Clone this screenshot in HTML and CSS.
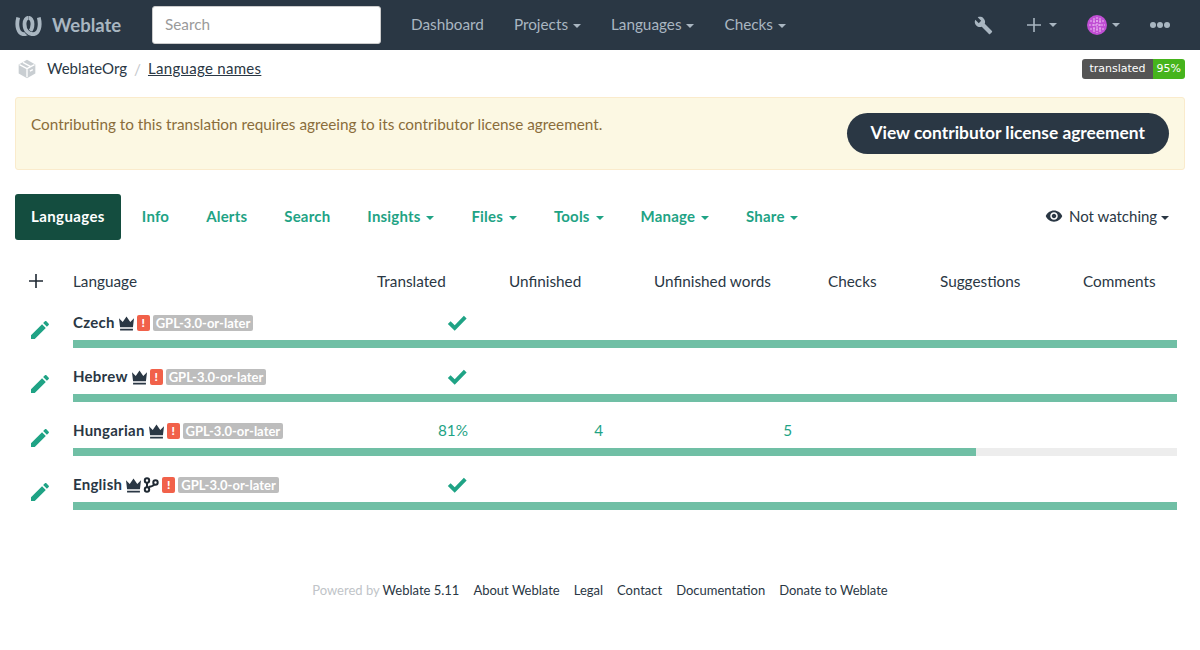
FILE: index.html
```html
<!DOCTYPE html>
<html lang="en">
<head>
    <meta charset="UTF-8">
    <meta name="viewport" content="width=device-width, initial-scale=1.0">
    <title>Language names @ Weblate</title>
    <link rel="stylesheet" href="styles.css">
</head>
<body>
    <nav class="navbar">
        <a class="brand" href="#">
            <svg class="brand-logo" viewBox="0 0 27 20" width="27" height="20">
                <path d="M3.200 1.500C1 10 3 18.200 9 18.200C13.500 18.200 17.500 14.500 17.500 8C17.500 4 15.500 1.800 13.500 1.800" fill="none" stroke="#a9b6c1" stroke-width="3.800"/>
                <path d="M23.800 1.500C26 10 24 18.200 18 18.200C13.500 18.200 9.500 14.500 9.500 8C9.500 4 11.500 1.800 13.500 1.800" fill="none" stroke="#2a3744" stroke-width="5"/>
                <path d="M23.800 1.500C26 10 24 18.200 18 18.200C13.500 18.200 9.500 14.500 9.500 8C9.500 4 11.500 1.800 13.500 1.800" fill="none" stroke="#a9b6c1" stroke-width="3.800"/>
            </svg>
            <span>Weblate</span>
        </a>
        <input class="nav-search" type="text" placeholder="Search">
        <ul class="nav-links">
            <li><a href="#">Dashboard</a></li>
            <li><a href="#">Projects <span class="caret"></span></a></li>
            <li><a href="#">Languages <span class="caret"></span></a></li>
            <li><a href="#">Checks <span class="caret"></span></a></li>
        </ul>
        <div class="nav-right">
            <svg class="nav-wrench" viewBox="0 0 24 24" width="24" height="24">
                <path d="M22.700 19l-9.100-9.100c.9-2.300.4-5-1.500-6.900-2-2-5-2.400-7.400-1.300L9 6 6 9 1.600 4.700C.4 7.100.9 10.100 2.900 12.100c1.900 1.900 4.600 2.400 6.900 1.500l9.100 9.100c.4.400 1 .4 1.400 0l2.300-2.300c.5-.4.500-1.100.1-1.400z" fill="#a9b6c1"/>
            </svg>
            <a class="nav-add" href="#">
                <svg viewBox="0 0 14 14" width="14" height="14"><path d="M6.200 0h1.600v6.200H14v1.600H7.800V14H6.200V7.800H0V6.200h6.200z" fill="#a9b6c1"/></svg>
                <span class="caret"></span>
            </a>
            <a class="nav-user" href="#">
                <svg class="avatar" viewBox="0 0 20 20" width="20" height="20">
                    <circle cx="10" cy="10" r="10" fill="#c04fd4"/>
                    <path d="M3 6h14M2 10h16M3 14h14M7 3v14M10 2v16M13 3v14" fill="none" stroke="#f0c4f5" stroke-width="0.900" stroke-dasharray="2 1"/>
                </svg>
                <span class="caret"></span>
            </a>
            <span class="nav-dots"><i></i><i></i><i></i></span>
        </div>
    </nav>

    <div class="breadcrumbs">
        <svg class="crumb-icon" viewBox="0 0 24 24" width="20" height="20">
            <path d="M12 1 L22 6.500 V17.500 L12 23 L2 17.500 V6.500 Z" fill="#c9ced2"/>
            <path d="M12 11.500 L21 6.800 M12 11.500 L3 6.800 M12 11.500 V22 M7 4 L16.500 9.200 M15.500 14.500 L19 12.700" stroke="#fff" stroke-width="1.600" fill="none"/>
        </svg>
        <a class="crumb" href="#">WeblateOrg</a>
        <span class="crumb-sep">/</span>
        <a class="crumb crumb-current" href="#">Language names</a>
        <span class="status-badge"><span class="badge-label">translated</span><span class="badge-value">95%</span></span>
    </div>

    <main class="content">
        <div class="alert">
            <p>Contributing to this translation requires agreeing to its contributor license agreement.</p>
            <a class="agreement-btn" href="#">View contributor license agreement</a>
        </div>

        <div class="tabs">
            <a class="tab tab-active" href="#">Languages</a>
            <a class="tab" href="#">Info</a>
            <a class="tab" href="#">Alerts</a>
            <a class="tab" href="#">Search</a>
            <a class="tab" href="#">Insights <span class="caret"></span></a>
            <a class="tab" href="#">Files <span class="caret"></span></a>
            <a class="tab" href="#">Tools <span class="caret"></span></a>
            <a class="tab" href="#">Manage <span class="caret"></span></a>
            <a class="tab" href="#">Share <span class="caret"></span></a>
            <a class="watching" href="#">
                <svg viewBox="0 0 24 24" width="18" height="18"><path d="M12 4.500C7 4.500 2.700 7.600 1 12c1.700 4.400 6 7.500 11 7.500s9.300-3.100 11-7.500c-1.700-4.400-6-7.500-11-7.500zM12 17c-2.800 0-5-2.200-5-5s2.200-5 5-5 5 2.200 5 5-2.200 5-5 5zm0-8c-1.700 0-3 1.300-3 3s1.300 3 3 3 3-1.300 3-3-1.300-3-3-3z" fill="#2a3744"/></svg>
                <span>Not watching <span class="caret"></span></span>
            </a>
        </div>

        <table class="languages">
            <colgroup>
                <col class="col-icon"><col class="col-name"><col class="col-translated"><col class="col-unfinished"><col class="col-words"><col class="col-checks"><col class="col-suggestions"><col class="col-comments">
            </colgroup>
            <thead>
                <tr>
                    <th class="icon-cell"><svg viewBox="0 0 14 14" width="14" height="14"><path d="M6.200 0h1.600v6.200H14v1.600H7.800V14H6.200V7.800H0V6.200h6.200z" fill="#1f2933"/></svg></th>
                    <th class="name-cell">Language</th>
                    <th>Translated</th>
                    <th>Unfinished</th>
                    <th>Unfinished words</th>
                    <th>Checks</th>
                    <th>Suggestions</th>
                    <th>Comments</th>
                </tr>
            </thead>
            <tbody>
                <tr class="lang-row">
                    <td class="icon-cell" rowspan="2"><svg class="pencil" viewBox="0 0 24 24" width="24" height="24"><path d="M3 17.250V21h3.750L17.810 9.940l-3.750-3.750L3 17.250zM20.710 7.040c.39-.39.39-1.020 0-1.410l-2.340-2.340c-.39-.39-1.020-.39-1.410 0l-1.830 1.830 3.750 3.750 1.830-1.830z"/></svg></td>
                    <td class="name-cell">
                        <div class="name-line">
                            <a class="lang-name" href="#">Czech</a>
                            <svg class="crown" viewBox="1 1 14 14" width="15" height="15"><path d="M1 3l3.500 3.500L8 1.500l3.500 5L15 3l-1 8.500H2zM2 13h12v1.500H2z"/></svg>
                            <span class="flag-alert">!</span>
                            <span class="license">GPL-3.0-or-later</span>
                        </div>
                    </td>
                    <td class="num-translated num-check"><svg class="check" viewBox="0 0 24 24" width="22" height="22"><path d="M9.500 20.500L2 13l3-3 4.500 4.500L19.500 4l3 3z"/></svg></td>
                    <td></td><td></td><td></td><td></td><td></td>
                </tr>
                <tr class="bar-row"><td colspan="7"><div class="bar"><div class="bar-fill" style="width: 100%"></div></div></td></tr>

                <tr class="lang-row">
                    <td class="icon-cell" rowspan="2"><svg class="pencil" viewBox="0 0 24 24" width="24" height="24"><path d="M3 17.250V21h3.750L17.810 9.940l-3.750-3.750L3 17.250zM20.710 7.040c.39-.39.39-1.020 0-1.410l-2.340-2.340c-.39-.39-1.020-.39-1.410 0l-1.830 1.830 3.750 3.750 1.830-1.830z"/></svg></td>
                    <td class="name-cell">
                        <div class="name-line">
                            <a class="lang-name" href="#">Hebrew</a>
                            <svg class="crown" viewBox="1 1 14 14" width="15" height="15"><path d="M1 3l3.500 3.500L8 1.500l3.500 5L15 3l-1 8.500H2zM2 13h12v1.500H2z"/></svg>
                            <span class="flag-alert">!</span>
                            <span class="license">GPL-3.0-or-later</span>
                        </div>
                    </td>
                    <td class="num-translated num-check"><svg class="check" viewBox="0 0 24 24" width="22" height="22"><path d="M9.500 20.500L2 13l3-3 4.500 4.500L19.500 4l3 3z"/></svg></td>
                    <td></td><td></td><td></td><td></td><td></td>
                </tr>
                <tr class="bar-row"><td colspan="7"><div class="bar"><div class="bar-fill" style="width: 100%"></div></div></td></tr>

                <tr class="lang-row">
                    <td class="icon-cell" rowspan="2"><svg class="pencil" viewBox="0 0 24 24" width="24" height="24"><path d="M3 17.250V21h3.750L17.810 9.940l-3.750-3.750L3 17.250zM20.710 7.040c.39-.39.39-1.020 0-1.410l-2.340-2.340c-.39-.39-1.020-.39-1.410 0l-1.830 1.830 3.750 3.750 1.830-1.830z"/></svg></td>
                    <td class="name-cell">
                        <div class="name-line">
                            <a class="lang-name" href="#">Hungarian</a>
                            <svg class="crown" viewBox="1 1 14 14" width="15" height="15"><path d="M1 3l3.500 3.500L8 1.500l3.500 5L15 3l-1 8.500H2zM2 13h12v1.500H2z"/></svg>
                            <span class="flag-alert">!</span>
                            <span class="license">GPL-3.0-or-later</span>
                        </div>
                    </td>
                    <td class="num-translated"><a href="#">81%</a></td>
                    <td class="num-unfinished"><a href="#">4</a></td>
                    <td class="num-words"><a href="#">5</a></td>
                    <td></td><td></td><td></td>
                </tr>
                <tr class="bar-row"><td colspan="7"><div class="bar"><div class="bar-fill" style="width: 81.800%"></div></div></td></tr>

                <tr class="lang-row">
                    <td class="icon-cell" rowspan="2"><svg class="pencil" viewBox="0 0 24 24" width="24" height="24"><path d="M3 17.250V21h3.750L17.810 9.940l-3.750-3.750L3 17.250zM20.710 7.040c.39-.39.39-1.020 0-1.410l-2.340-2.340c-.39-.39-1.020-.39-1.410 0l-1.830 1.830 3.750 3.750 1.830-1.830z"/></svg></td>
                    <td class="name-cell">
                        <div class="name-line">
                            <a class="lang-name" href="#">English</a>
                            <svg class="crown" viewBox="1 1 14 14" width="15" height="15"><path d="M1 3l3.500 3.500L8 1.500l3.500 5L15 3l-1 8.500H2zM2 13h12v1.500H2z"/></svg>
                            <svg class="branch" viewBox="0 0 16 16" width="16" height="16"><circle cx="4" cy="3.500" r="2.200"/><circle cx="4" cy="12.500" r="2.200"/><circle cx="12.500" cy="5.500" r="2.200"/><path d="M4 5.700v4.600M5.500 10c3-.3 5-1.200 6-2.700"/></svg>
                            <span class="flag-alert">!</span>
                            <span class="license">GPL-3.0-or-later</span>
                        </div>
                    </td>
                    <td class="num-translated num-check"><svg class="check" viewBox="0 0 24 24" width="22" height="22"><path d="M9.500 20.500L2 13l3-3 4.500 4.500L19.500 4l3 3z"/></svg></td>
                    <td></td><td></td><td></td><td></td><td></td>
                </tr>
                <tr class="bar-row"><td colspan="7"><div class="bar"><div class="bar-fill" style="width: 100%"></div></div></td></tr>
            </tbody>
        </table>
    </main>

    <footer class="footer">
        <span class="powered">Powered by <a href="#">Weblate 5.11</a></span>
        <a href="#">About Weblate</a>
        <a href="#">Legal</a>
        <a href="#">Contact</a>
        <a href="#">Documentation</a>
        <a href="#">Donate to Weblate</a>
    </footer>
</body>
</html>
```

FILE: styles.css
```css
/* Basic reset */
* {
    box-sizing: border-box;
    margin: 0;
    padding: 0;
}

body {
    font-family: Lato, 'Noto Sans', sans-serif;
    font-size: 15.3px;
    color: #2a3744;
    background-color: #fff;
}

a {
    color: inherit;
    text-decoration: none;
}

.caret {
    display: inline-block;
    width: 0;
    height: 0;
    margin-left: 2px;
    vertical-align: middle;
    border-top: 4px solid currentColor;
    border-left: 4px solid transparent;
    border-right: 4px solid transparent;
}

/* Top navigation */
.navbar {
    display: flex;
    align-items: center;
    height: 50px;
    padding-left: 15px;
    background-color: #2a3744;
    color: #a9b6c1;
}

.brand {
    display: flex;
    align-items: center;
    gap: 10px;
    width: 137px;
    font-size: 18.500px;
    font-weight: 700;
}

.brand-logo {
    margin-top: 1px;
}

.nav-search {
    width: 229px;
    height: 38px;
    padding: 0 12px 2px;
    font: inherit;
    border: 1px solid #ccc;
    border-radius: 3px;
    background-color: #fff;
}

.nav-search::placeholder {
    color: #9a9a9a;
}

.nav-links {
    display: flex;
    gap: 30px;
    margin-left: 30px;
    margin-bottom: 2px;
    list-style: none;
}

.nav-links .caret {
    margin-left: 1px;
}

.nav-right {
    display: flex;
    align-items: center;
    margin-left: auto;
    padding-right: 30px;
}

.nav-wrench {
    width: 19px;
    height: 19px;
}

.nav-add {
    display: flex;
    align-items: center;
    gap: 6px;
    margin-left: 34px;
}

.nav-user {
    display: flex;
    align-items: center;
    gap: 3px;
    margin-left: 30px;
}

.nav-dots {
    display: flex;
    gap: 1px;
    margin-left: 30px;
}

.nav-dots i {
    width: 6px;
    height: 6px;
    border-radius: 50%;
    background-color: #a9b6c1;
}

/* Breadcrumbs */
.breadcrumbs {
    display: flex;
    align-items: center;
    height: 38px;
    padding: 0 15px 1px;
}

.crumb-icon {
    margin: 0 10px 0 2px;
}

.crumb {
    margin-bottom: 1px;
    font-size: 15px;
}

.crumb-sep {
    margin: 0 7px;
    color: #c5c9cd;
}

.crumb-current {
    letter-spacing: 0.3px;
    text-decoration: underline;
}

.status-badge {
    display: flex;
    margin-left: auto;
    height: 20px;
    line-height: 20px;
    font-family: 'DejaVu Sans', sans-serif;
    font-size: 11px;
    color: #fff;
    border-radius: 3px;
    overflow: hidden;
}

.badge-label {
    padding: 0 7px;
    background-color: #555;
}

.badge-value {
    padding: 0 4px;
    background-color: #46b41c;
}

/* Main content */
.content {
    padding: 9px 15px 0;
}

.alert {
    display: flex;
    justify-content: space-between;
    height: 73px;
    padding: 15px 15px 0 15px;
    color: #8a6d3b;
    background-color: #fcf8e3;
    border: 1px solid #faebcc;
    border-radius: 3px;
}

.alert p {
    padding-top: 2px;
}

.agreement-btn {
    height: 41px;
    padding: 0 24px;
    line-height: 40px;
    font-size: 17.350px;
    font-weight: 700;
    color: #fff;
    background-color: #2a3744;
    border-radius: 21px;
}

.tabs {
    display: flex;
    align-items: center;
    gap: 5px;
    margin-top: 24px;
    font-size: 15px;
    font-weight: 700;
    color: #1fa385;
}

.tab {
    height: 46px;
    padding: 0 16px;
    line-height: 44px;
    letter-spacing: 0.2px;
}

.tab-active {
    letter-spacing: 0.4px;
    color: #fff;
    background-color: #144d3f;
    border-radius: 3px;
}

.watching {
    display: flex;
    align-items: center;
    gap: 6px;
    margin-left: auto;
    padding-right: 16px;
    padding-bottom: 2px;
    font-weight: 400;
    color: #2a3744;
}

.watching .caret {
    margin-left: 0;
}

/* Language table */
.languages {
    width: 1162px;
    margin-top: 24px;
    table-layout: fixed;
    border-collapse: collapse;
}

.col-icon { width: 58px; }
.col-name { width: 288px; }
.col-translated { width: 132px; }
.col-unfinished { width: 145px; }
.col-words { width: 174px; }
.col-checks { width: 112px; }
.col-suggestions { width: 143px; }
.col-comments { width: 110px; }

.languages th {
    height: 36px;
    padding: 0 0 2px 16px;
    font-weight: 400;
    text-align: left;
}

.languages th.icon-cell {
    padding: 0 0 0 14px;
}

.languages th.name-cell {
    padding-left: 0;
}

.lang-row td {
    height: 40px;
    padding-bottom: 9px;
    white-space: nowrap;
    vertical-align: bottom;
    color: #1fa385;
    text-align: right;
}

.languages td.icon-cell {
    padding: 6px 0 0 13px;
    vertical-align: middle;
    text-align: left;
}

.lang-row td.name-cell {
    text-align: left;
    color: #2a3744;
}

.lang-row td.num-check {
    padding-bottom: 6px;
}

.name-line {
    display: flex;
    align-items: center;
    gap: 3px;
}

.lang-name {
    font-size: 15px;
    font-weight: 700;
    letter-spacing: 0.25px;
}

.pencil {
    display: block;
    fill: #1fa385;
}

.crown {
    margin: 2px 0 0 1px;
    fill: #2a3744;
}

.branch {
    margin: 2px 0 0 -1px;
    fill: none;
    stroke: #1f2933;
    stroke-width: 2;
}

.flag-alert {
    width: 13px;
    height: 16px;
    margin-top: 2px;
    line-height: 16px;
    font-size: 12px;
    font-weight: 900;
    text-align: center;
    color: #fff;
    background-color: #f1614a;
    border-radius: 2px;
}

.license {
    height: 16px;
    margin-top: 2px;
    padding: 0 3px;
    line-height: 16px;
    font-size: 13px;
    font-weight: 700;
    color: #fff;
    background-color: #bdbdbd;
    border-radius: 2px;
}

.check {
    display: block;
    margin-left: auto;
    fill: #1fa385;
}

.lang-row td.num-translated { padding-right: 25px; }
.lang-row td.num-unfinished { padding-right: 35px; }
.lang-row td.num-words { padding-right: 20px; }

.bar-row td {
    height: 14px;
    vertical-align: top;
}

.bar {
    height: 8px;
    background-color: #ededed;
}

.bar-fill {
    height: 100%;
    background-color: #70bfa5;
}

/* Footer */
.footer {
    display: flex;
    justify-content: center;
    gap: 14px;
    margin-top: 66px;
    font-size: 13px;
}

.powered {
    color: #c0c4c8;
}

.powered a {
    color: #2a3744;
}
```
